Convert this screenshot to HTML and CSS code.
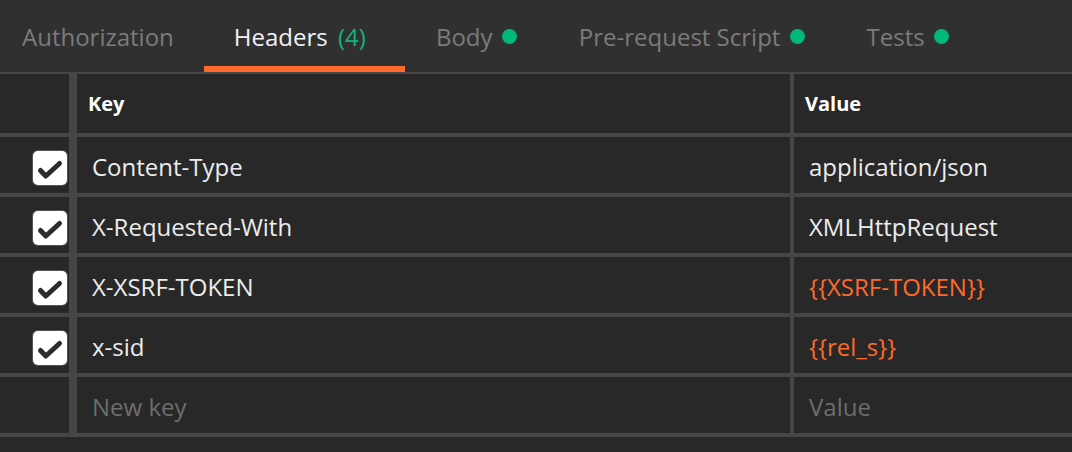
FILE: index.html
```html
<!DOCTYPE html>
<html lang="en">
<head>
<meta charset="utf-8">
<title>Request headers</title>
<link rel="stylesheet" href="styles.css">
</head>
<body>
<div class="panel">
  <nav class="tabs">
    <div class="tab tab-first">Authorization</div>
    <div class="tab tab-active">Headers <span class="count">(4)</span></div>
    <div class="tab tab-flag">Body <span class="dot"></span></div>
    <div class="tab tab-flag">Pre-request Script <span class="dot"></span></div>
    <div class="tab tab-flag">Tests <span class="dot"></span></div>
  </nav>

  <div class="table">
    <div class="cell cell-check head"></div>
    <div class="cell head">Key</div>
    <div class="cell head">Value</div>

    <div class="cell cell-check"><span class="check"><svg viewBox="0 0 34 34" width="34" height="34"><path d="M7.5 19.5 L12.8 25 L26.5 12.5" /></svg></span></div>
    <div class="cell">Content-Type</div>
    <div class="cell">application/json</div>

    <div class="cell cell-check"><span class="check"><svg viewBox="0 0 34 34" width="34" height="34"><path d="M7.5 19.5 L12.8 25 L26.5 12.5" /></svg></span></div>
    <div class="cell">X-Requested-With</div>
    <div class="cell">XMLHttpRequest</div>

    <div class="cell cell-check"><span class="check"><svg viewBox="0 0 34 34" width="34" height="34"><path d="M7.5 19.5 L12.8 25 L26.5 12.5" /></svg></span></div>
    <div class="cell">X-XSRF-TOKEN</div>
    <div class="cell var">{{XSRF-TOKEN}}</div>

    <div class="cell cell-check"><span class="check"><svg viewBox="0 0 34 34" width="34" height="34"><path d="M7.5 19.5 L12.8 25 L26.5 12.5" /></svg></span></div>
    <div class="cell">x-sid</div>
    <div class="cell var">{{rel_s}}</div>

    <div class="cell cell-check"></div>
    <div class="cell placeholder">New key</div>
    <div class="cell placeholder">Value</div>
  </div>
</div>
</body>
</html>
```

FILE: styles.css
```css
* {
  box-sizing: border-box;
}

html, body {
  margin: 0;
  padding: 0;
  background: #282828;
}

body {
  width: 1072px;
  height: 452px;
  overflow: hidden;
  font-family: "Open Sans", "Noto Sans", sans-serif;
}

.panel {
  display: flex;
  flex-direction: column;
}

/* tab strip */
.tabs {
  display: flex;
  height: 72px;
  background: #303030;
}

.tab {
  display: flex;
  align-items: center;
  padding: 6px 30px 0;
  font-size: 24px;
  color: #7b7b7b;
  white-space: pre;
  border-bottom: 6px solid transparent;
}

.tab-first {
  padding-left: 22px;
}

.tab-active {
  color: #f2f2f2;
  border-bottom-color: #ff6a2b;
  padding-right: 39px;
}

.tab-flag {
  padding-left: 31px;
  padding-right: 31px;
}

.count {
  color: #0fb47c;
  margin-left: 4px;
}

.dot {
  display: inline-block;
  width: 15px;
  height: 15px;
  border-radius: 50%;
  background: #00b87c;
  margin-left: 3px;
}

/* key / value grid */
.table {
  display: grid;
  grid-template-columns: 73px 1fr 278px;
  grid-auto-rows: 56px;
  grid-template-rows: 59px;
  gap: 4px;
  padding: 2px 0 4px;
  background: #464646;
}

.cell {
  display: flex;
  align-items: center;
  background: #282828;
  padding: 2px 0 0 15px;
  font-size: 24px;
  color: #ececec;
  white-space: nowrap;
}

.cell-check {
  justify-content: flex-end;
  padding: 6px 2px 0 0;
  border-right: 4px solid #464646;
}

.head {
  font-size: 20px;
  font-weight: 700;
  color: #ffffff;
  padding: 0 0 0 11px;
}

.var {
  color: #ff6a2b;
}

.placeholder {
  color: #6d6d6d;
}

.check {
  display: block;
  width: 34px;
  height: 34px;
  border-radius: 5px;
  background: #ffffff;
  box-shadow: 0 0 0 1px #555555;
}

.check svg {
  display: block;
  fill: none;
  stroke: #2c2c2c;
  stroke-width: 5;
  stroke-linecap: round;
  stroke-linejoin: round;
}
```
